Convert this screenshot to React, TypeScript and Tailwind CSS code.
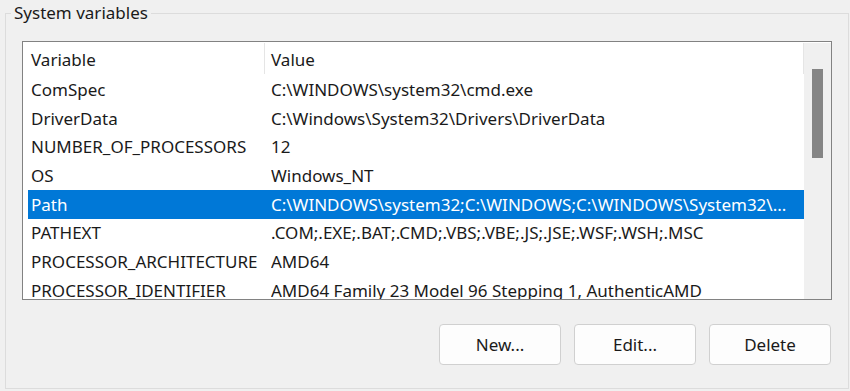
import React from "react";

type Row = { name: string; value: string };

const rows: Row[] = [
    { name: "ComSpec", value: "C:\\WINDOWS\\system32\\cmd.exe" },
    { name: "DriverData", value: "C:\\Windows\\System32\\Drivers\\DriverData" },
    { name: "NUMBER_OF_PROCESSORS", value: "12" },
    { name: "OS", value: "Windows_NT" },
    { name: "Path", value: "C:\\WINDOWS\\system32;C:\\WINDOWS;C:\\WINDOWS\\System32\\..." },
    { name: "PATHEXT", value: ".COM;.EXE;.BAT;.CMD;.VBS;.VBE;.JS;.JSE;.WSF;.WSH;.MSC" },
    { name: "PROCESSOR_ARCHITECTURE", value: "AMD64" },
    { name: "PROCESSOR_IDENTIFIER", value: "AMD64 Family 23 Model 96 Stepping 1, AuthenticAMD" },
];

const selected = "Path";

const Button = ({ label }: { label: string }) => {
    return (
        <button className="w-[122px] h-[41px] rounded-[4px] border border-[#d0d0d0] bg-[#fdfdfd] text-[17px] text-[#1a1a1a]">
            {label}
        </button>
    );
};

const App = () => {
    return (
        <div
            className="w-[850px] h-[391px] bg-[#f0f0f0] overflow-hidden pt-[3px] pl-[5px]"
            style={{ fontFamily: '"Noto Sans", "Open Sans", sans-serif' }}
        >
            <fieldset className="w-[844px] h-[386px] border border-[#dcdcdc]">
                <legend className="ml-[5px] px-[3px] text-[17px] leading-[20px] text-[#1a1a1a]">
                    System variables
                </legend>
                <div className="ml-[16px] mt-[18px] w-[810px] h-[259px] border border-[#828282] bg-white flex overflow-hidden">
                    <div className="flex-1 flex flex-col overflow-hidden">
                        <div className="h-[33.33px] flex items-center text-[17px] text-[#1a1a1a] shrink-0">
                            <div className="w-[241px] pl-[8px] pt-[3px]">Variable</div>
                            <div className="w-px h-[31px] self-start mt-[1px] bg-[#e5e5e5]" />
                            <div className="flex-1 pl-[6px] pt-[3px]">Value</div>
                            <div className="w-px h-[31px] self-start mt-[1px] bg-[#e5e5e5]" />
                        </div>
                        {rows.map((r) => {
                            const sel = r.name === selected;
                            return (
                                <div
                                    key={r.name}
                                    className={
                                        "ml-[5px] h-[28.67px] shrink-0 flex items-center text-[17px] whitespace-nowrap " +
                                        (sel ? "bg-[#0078d7] text-white" : "text-[#1a1a1a]")
                                    }
                                >
                                    <div className="w-[243px] pl-[3px] overflow-hidden">{r.name}</div>
                                    <div className="flex-1 overflow-hidden">{r.value}</div>
                                </div>
                            );
                        })}
                    </div>
                    <div className="w-[27px] bg-[#f0f0f0] mt-[1px] flex justify-center">
                        <div className="mt-[26px] w-[11px] h-[89px] bg-[#858585]" />
                    </div>
                </div>
                <div className="mt-[24px] flex justify-end gap-[13px] pr-[17px]">
                    <Button label="New..." />
                    <Button label="Edit..." />
                    <Button label="Delete" />
                </div>
            </fieldset>
        </div>
    );
};

export default App;
